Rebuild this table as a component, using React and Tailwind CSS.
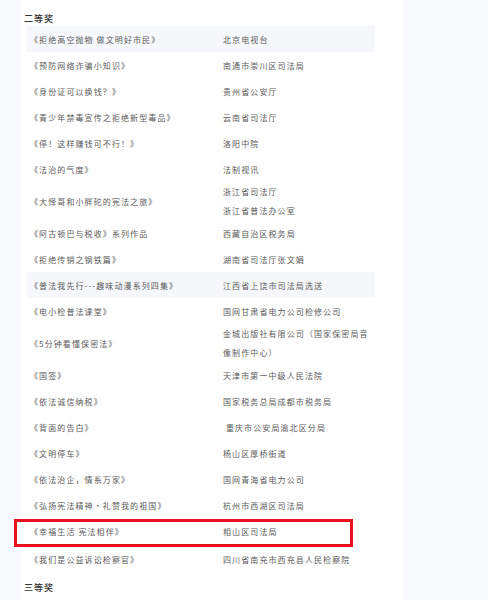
const rows = [
  { work: '《拒绝高空抛物 做文明好市民》', unit: ['北京电视台'], shade: true },
  { work: '《预防网络诈骗小知识》', unit: ['南通市崇川区司法局'] },
  { work: '《身份证可以换钱？》', unit: ['贵州省公安厅'] },
  { work: '《青少年禁毒宣传之拒绝新型毒品》', unit: ['云南省司法厅'] },
  { work: '《停！这样赚钱可不行！》', unit: ['洛阳中院'] },
  { work: '《法治的气度》', unit: ['法制视讯'] },
  { work: '《大怿哥和小胖砣的宪法之旅》', unit: ['浙江省司法厅', '浙江省普法办公室'] },
  { work: '《阿古顿巴与税收》系列作品', unit: ['西藏自治区税务局'] },
  { work: '《拒绝传销之钢铁篇》', unit: ['湖南省司法厅张文娟'] },
  { work: '《普法我先行---趣味动漫系列四集》', unit: ['江西省上饶市司法局选送'], shade: true },
  { work: '《电小检普法课堂》', unit: ['国网甘肃省电力公司检修公司'] },
  { work: '《5分钟看懂保密法》', unit: ['金城出版社有限公司（国家保密局音', '像制作中心）'] },
  { work: '《国签》', unit: ['天津市第一中级人民法院'] },
  { work: '《依法诚信纳税》', unit: ['国家税务总局成都市税务局'] },
  { work: '《背面的告白》', unit: [' 重庆市公安局渝北区分局'] },
  { work: '《文明停车》', unit: ['杨山区厚桥街道'] },
  { work: '《依法治企，情系万家》', unit: ['国网青海省电力公司'] },
  { work: '《弘扬宪法精神・礼赞我的祖国》', unit: ['杭州市西湖区司法局'] },
  { work: '《幸福生活 宪法相伴》', unit: ['相山区司法局'], marked: true },
  { work: '《我们是公益诉讼检察官》', unit: ['四川省南充市西充县人民检察院'], tall: true },
];

function Row({ row }) {
  const multi = row.unit.length > 1;
  return (
    <div
      className={`relative flex items-center ${multi ? 'h-[38px]' : row.tall ? 'h-[30px]' : 'h-[26px]'} ${row.shade ? 'bg-[#f6f7fb]' : ''}`}
    >
      <div className="w-[196px] shrink-0 pl-[3px]">{row.work}</div>
      <div className="flex flex-col leading-[19px]">
        {row.unit.map((u) => (
          <span key={u} className="whitespace-pre">{u}</span>
        ))}
      </div>
      {row.marked && (
        <div className="absolute left-[-13px] top-[1px] w-[339px] h-[28px] border-[3px] border-[#e8111c]" />
      )}
    </div>
  );
}

export default function App() {
  return (
    <div
      className="w-[488px] h-[600px] overflow-hidden bg-[#f8f9fc] flex"
      style={{ fontFamily: '"Noto Sans CJK SC", "Noto Sans", sans-serif' }}
    >
      <div className="ml-[21px] w-[382px] h-full bg-white pt-[11px]">
        <div className="pl-[3px] text-[9px] leading-[15px] font-medium text-[#333] tracking-[1px]">二等奖</div>
        <div className="ml-[6px] w-[348px] text-[8px] leading-[19px] text-[#5a5a5a] tracking-[1.1px]">
          {rows.map((r) => (
            <Row key={r.work} row={r} />
          ))}
        </div>
        <div className="pl-[3px] pt-[6px] text-[9px] leading-[15px] font-medium text-[#333] tracking-[1px]">三等奖</div>
      </div>
    </div>
  );
}
